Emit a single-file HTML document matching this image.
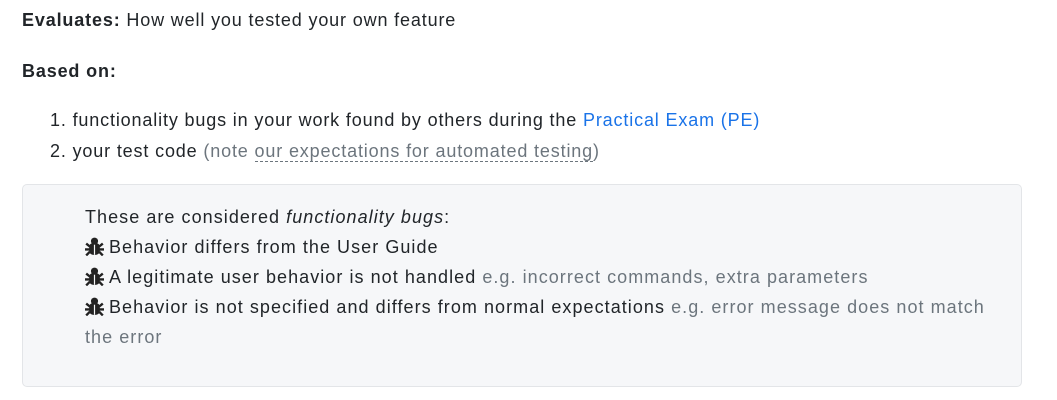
<!DOCTYPE html>
<html><head><style>
body{margin:0;background:#fff;font-family:"Liberation Sans",sans-serif;font-size:18px;color:#212529;letter-spacing:0.85px;}
.l{position:absolute;white-space:nowrap;line-height:30px;}
.b .l{letter-spacing:1.05px}
.g{color:#6c757d}
.a{color:#1a73e8}
.box{position:absolute;left:22px;top:184px;width:998px;height:201px;background:#f6f7f9;border:1px solid #e3e5e8;border-radius:5px;}
.d{border-bottom:1.5px dashed #6c757d}
svg{vertical-align:-3px;margin-right:5px}
</style></head><body>
<div class="l" style="left:22px;top:5px"><b>Evaluates:</b> How well you tested your own feature</div>
<div class="l" style="left:22px;top:56px"><b>Based on:</b></div>
<div class="l" style="left:50px;top:105px">1. functionality bugs in your work found by others during the <span class="a">Practical Exam (PE)</span></div>
<div class="l" style="left:50px;top:136px">2. your test code <span class="g">(note <span class="d">our expectations for automated testing</span>)</span></div>
<div class="box"></div>
<div class="b">
<div class="l" style="left:85px;top:202px">These are considered <i>functionality bugs</i>:</div>
<div class="l" style="left:85px;top:232px"><svg width="19" height="19" viewBox="0 0 16 16"><g fill="#222"><circle cx="8" cy="3.5" r="3"/><rect x="3.5" y="5" width="9" height="10" rx="3.5"/><path d="M1 5.5l3 2.5M15 5.5l-3 2.5M0 10.5h4M16 10.5H12M1 15.5l3-3M15 15.5l-3-3" stroke="#222" stroke-width="2"/></g><path d="M8 6.5v8.5" stroke="#f6f7f9" stroke-width="1"/></svg>Behavior differs from the User Guide</div>
<div class="l" style="left:85px;top:262px"><svg width="19" height="19" viewBox="0 0 16 16"><g fill="#222"><circle cx="8" cy="3.5" r="3"/><rect x="3.5" y="5" width="9" height="10" rx="3.5"/><path d="M1 5.5l3 2.5M15 5.5l-3 2.5M0 10.5h4M16 10.5H12M1 15.5l3-3M15 15.5l-3-3" stroke="#222" stroke-width="2"/></g><path d="M8 6.5v8.5" stroke="#f6f7f9" stroke-width="1"/></svg>A legitimate user behavior is not handled <span class="g">e.g. incorrect commands, extra parameters</span></div>
<div class="l" style="left:85px;top:292px"><svg width="19" height="19" viewBox="0 0 16 16"><g fill="#222"><circle cx="8" cy="3.5" r="3"/><rect x="3.5" y="5" width="9" height="10" rx="3.5"/><path d="M1 5.5l3 2.5M15 5.5l-3 2.5M0 10.5h4M16 10.5H12M1 15.5l3-3M15 15.5l-3-3" stroke="#222" stroke-width="2"/></g><path d="M8 6.5v8.5" stroke="#f6f7f9" stroke-width="1"/></svg>Behavior is not specified and differs from normal expectations <span class="g">e.g. error message does not match</span></div>
<div class="l g" style="left:85px;top:322px">the error</div>
</div>
</body></html>
